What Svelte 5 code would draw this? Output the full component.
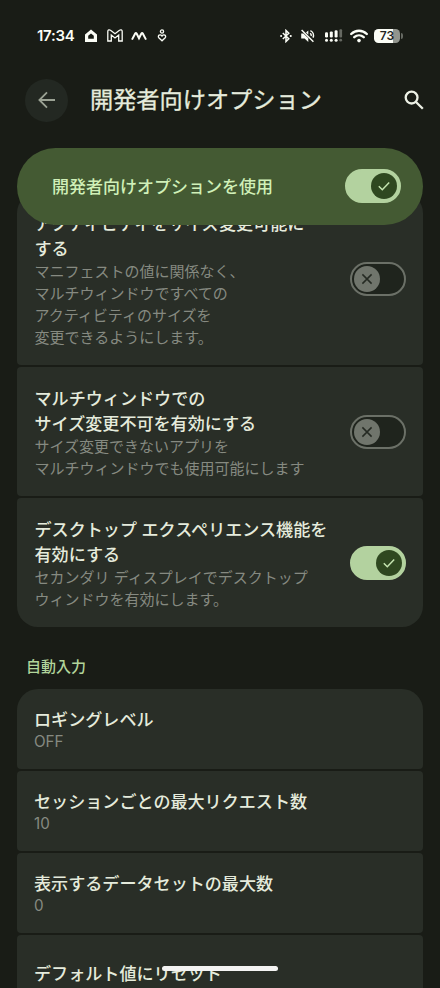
<script>
  let enabled = $state(true);

  let windowing = $state([
    {
      title: ['アクティビティをサイズ変更可能に', 'する'],
      summary: ['マニフェストの値に関係なく、', 'マルチウィンドウですべての', 'アクティビティのサイズを', '変更できるようにします。'],
      on: false
    },
    {
      title: ['マルチウィンドウでの', 'サイズ変更不可を有効にする'],
      summary: ['サイズ変更できないアプリを', 'マルチウィンドウでも使用可能にします'],
      on: false
    },
    {
      title: ['デスクトップ エクスペリエンス機能を', '有効にする'],
      summary: ['セカンダリ ディスプレイでデスクトップ', 'ウィンドウを有効にします。'],
      on: true
    }
  ]);

  const autofill = [
    { title: 'ロギングレベル', value: 'OFF' },
    { title: 'セッションごとの最大リクエスト数', value: '10' },
    { title: '表示するデータセットの最大数', value: '0' },
    { title: 'デフォルト値にリセット' }
  ];
</script>

{#snippet toggle(on, flip)}
  <button class="switch" class:on role="switch" aria-checked={on} aria-label="切り替え" onclick={flip}>
    <span class="knob">
      <svg width="16" height="16" viewBox="0 0 16 16">
        {#if on}
          <path d="M2.8 8.3 6.3 11.7 13.2 4.6" />
        {:else}
          <path d="M3.4 3.4 12.6 12.6M12.6 3.4 3.4 12.6" />
        {/if}
      </svg>
    </span>
  </button>
{/snippet}

<div class="screen">
  <div class="status">
    <span class="time">17:34</span>
    <svg class="home" width="14" height="14" viewBox="0 0 14 14">
      <path fill-rule="evenodd" d="M7 .6 13 5.4V13H1V5.4ZM7 4.4 4.2 6.8V9.8H9.8V6.8Z" />
    </svg>
    <svg class="mail line" width="16" height="13" viewBox="0 0 16 13">
      <path d="M.8 2.4C.8.8 2.4.4 3.5 1.3L8 4.8 12.5 1.3C13.6.4 15.2.8 15.2 2.4V12H11.7V6L8 8.9 4.3 6V12H.8Z" />
    </svg>
    <svg class="wave line" width="16" height="10" viewBox="0 0 16 10">
      <path d="M1 8.6 4.2 2.6Q4.9 1.4 5.6 2.6L8 7.3 10.4 2.6Q11.1 1.4 11.8 2.6L15 8.6" />
    </svg>
    <svg class="care line" width="10" height="13" viewBox="0 0 10 13">
      <circle cx="5" cy="2.5" r="1.6" />
      <path d="M5 11.8 1.8 8.7C.2 6.7 3.1 4.5 5 7 6.9 4.5 9.8 6.7 8.2 8.7Z" />
    </svg>

    <svg class="bluetooth line" width="12" height="14" viewBox="0 0 12 14">
      <path d="M2.8 4 8.8 9.7 6 12.5V1.5L8.8 4.3 2.8 10" />
      <path d="M1 7h.2M10.6 7h.3" stroke-linecap="round" stroke-width="1.8" />
    </svg>
    <svg class="mute" width="15" height="14" viewBox="0 0 15 14">
      <path d="M1.2 4.4H3.4L8.3 9.2V13L4.6 9.6H1.2ZM6 3.4 8.3 1.4V5.7Z" />
      <path class="stroke" d="M1.6 1 13.4 12.8M10.2 4.2C11.1 5 11.4 6 11.2 7M10.4 1.6C13 2.9 14.2 5.8 13 8.6" />
    </svg>
    <svg class="signal" width="18" height="13" viewBox="0 0 18 13">
      <rect x="0" y="3.2" width="3" height="5.2" rx="1.2" />
      <rect x="4.8" y="2.4" width="3" height="6" rx="1.2" />
      <rect x="9.6" y="1.2" width="3" height="7.2" rx="1.2" />
      <rect class="dim" x="14.4" y=".2" width="2.7" height="8.2" rx="1" />
      <circle cx="1.5" cy="11.2" r="1.5" />
      <circle cx="6.3" cy="11.2" r="1.5" />
      <circle cx="11.1" cy="11.2" r="1.5" />
      <circle class="dim" cx="15.7" cy="11.2" r="1.4" />
    </svg>
    <svg class="wifi" width="18" height="14" viewBox="0 0 18 14">
      <path class="stroke" d="M1.2 5C5.6.7 12.4.7 16.8 5M4.3 8.2C7 5.8 11 5.8 13.7 8.2" />
      <circle cx="9" cy="11.6" r="1.8" />
    </svg>
    <div class="battery"><span>73</span></div>
  </div>

  <header>
    <button class="back" aria-label="戻る">
      <svg width="18" height="18" viewBox="0 0 18 18">
        <path d="M17 9H1.6M9 1.4 1.4 9 9 16.6" />
      </svg>
    </button>
    <h1>開発者向けオプション</h1>
    <button class="search" aria-label="検索">
      <svg width="20" height="20" viewBox="0 0 20 20">
        <circle cx="7.6" cy="7.6" r="5.9" />
        <path d="M12 12 18.8 18.8" />
      </svg>
    </button>
  </header>

  <div class="main-switch">
    <span class="label">開発者向けオプションを使用</span>
    {@render toggle(enabled, () => (enabled = !enabled))}
  </div>

  <section class="windowing">
    {#each windowing as item}
      <div class="card">
        <div class="text">
          <h3>{#each item.title as line}<span>{line}</span>{/each}</h3>
          <p>{#each item.summary as line}<span>{line}</span>{/each}</p>
        </div>
        {@render toggle(item.on, () => (item.on = !item.on))}
      </div>
    {/each}
  </section>

  <h2>自動入力</h2>

  <section>
    {#each autofill as item}
      <div class="card small">
        <div class="text">
          <h3>{item.title}</h3>
          {#if item.value}<p>{item.value}</p>{/if}
        </div>
      </div>
    {/each}
  </section>

  <div class="gesture"></div>
</div>

<style>
  :global(body) {
    background: #191c16;
  }

  .screen {
    position: relative;
    width: 440px;
    height: 988px;
    overflow: hidden;
    background: #191c16;
    color: #e5ebdc;
    font-family: Inter, "Noto Sans CJK JP", sans-serif;
  }

  h1, h2, h3, p {
    margin: 0;
  }

  button {
    border: 0;
    padding: 0;
    cursor: pointer;
  }

  svg {
    display: block;
    flex: none;
  }

  .status {
    display: flex;
    align-items: center;
    height: 71px;
    padding: 0 37px;
    box-sizing: border-box;
    fill: #fbfdf6;
    color: #fbfdf6;
  }
  .time {
    width: 47px;
    font-size: 15px;
    font-weight: 600;
    letter-spacing: -0.25px;
  }
  .status .line {
    fill: none;
    stroke: #fbfdf6;
    stroke-width: 1.3;
  }
  .status .stroke {
    fill: none;
    stroke: #fbfdf6;
    stroke-width: 1.5;
  }
  .status .wave {
    margin-left: 8px;
    stroke-width: 2;
  }
  .mail {
    margin-left: 9px;
  }
  .care {
    margin-left: 10px;
  }
  .bluetooth {
    margin-left: auto;
  }
  .status .bluetooth {
    stroke-width: 1.5;
  }
  .mute {
    margin-left: 8px;
  }
  .signal {
    margin-left: 10px;
  }
  .wifi {
    margin-left: 7px;
  }
  .status .wifi .stroke {
    stroke-width: 2.4;
    stroke-linecap: round;
  }
  .dim {
    fill: #666962;
  }
  .battery {
    position: relative;
    width: 26px;
    height: 14px;
    margin: 0 3px 0 6px;
    border-radius: 4.5px;
    background: linear-gradient(90deg, #fbfdf6 73%, #92958e 73%);
    color: #20231d;
    font-size: 12px;
    font-weight: 600;
    line-height: 14px;
    text-align: center;
  }
  .battery::after {
    content: "";
    position: absolute;
    left: 27px;
    top: 4px;
    width: 2px;
    height: 6px;
    border-radius: 0 2px 2px 0;
    background: #666962;
  }

  header {
    display: flex;
    align-items: center;
    height: 58px;
    padding: 0 16px 0 25px;
  }
  .back {
    display: grid;
    place-items: center;
    width: 43px;
    height: 43px;
    border-radius: 50%;
    background: #232822;
  }
  .back path {
    fill: none;
    stroke: #9ba294;
    stroke-width: 1.8;
  }
  h1 {
    flex: 1;
    margin-left: 22px;
    font-size: 23.2px;
    font-weight: 400;
    line-height: 32px;
    white-space: nowrap;
    -webkit-text-stroke: 0.3px currentColor;
  }
  .search {
    background: none;
  }
  .search svg {
    fill: none;
    stroke: #edf1e6;
    stroke-width: 2.3;
  }

  .main-switch {
    position: relative;
    z-index: 1;
    display: flex;
    align-items: center;
    justify-content: space-between;
    box-sizing: border-box;
    height: 77px;
    margin: 19px 17px 0;
    padding: 0 22px 1px 35px;
    border-radius: 39px;
    background: #445a33;
    color: #d0f0b8;
    font-size: 17px;
    font-weight: 500;
  }
  .label {
    padding-bottom: 2px;
  }

  section {
    display: flex;
    flex-direction: column;
    gap: 2px;
    margin: 0 17px;
  }
  /* the list is scrolled a little under the main switch */
  .windowing {
    margin-top: -33px;
  }

  .card {
    display: flex;
    align-items: center;
    justify-content: space-between;
    box-sizing: border-box;
    padding: 18px 17px 17px;
    border-radius: 4px;
    background: #292e27;
  }
  .card:first-child {
    border-top-left-radius: 21px;
    border-top-right-radius: 21px;
  }
  .windowing .card:last-child {
    border-bottom-left-radius: 21px;
    border-bottom-right-radius: 21px;
  }
  .windowing .text {
    margin: 1px 0 -1px 0.5px;
  }
  .small {
    height: 80px;
    padding: 17px 17px 16px;
  }
  .text {
    white-space: nowrap;
  }
  .text span {
    display: block;
  }
  h3 {
    font-size: 17.08px;
    font-weight: 500;
    line-height: 25px;
  }
  p {
    color: #868a81;
    font-size: 15px;
    line-height: 22px;
  }
  .small p {
    margin-top: -1px;
    font-size: 15.2px;
  }
  .small:last-child {
    padding-top: 13px;
  }

  h2 {
    margin: 28px 26px 11px;
    color: #b1d59b;
    font-size: 15px;
    font-weight: 500;
    line-height: 23px;
  }

  .switch {
    display: flex;
    align-items: center;
    flex: none;
    box-sizing: border-box;
    width: 56px;
    height: 34px;
    padding: 0 2px;
    border: 2px solid #6b7067;
    border-radius: 17px;
    background: #1f241d;
  }
  .switch.on {
    justify-content: flex-end;
    border-color: #b3d29f;
    background: #b3d29f;
  }
  .knob {
    display: grid;
    place-items: center;
    width: 26px;
    height: 26px;
    border-radius: 50%;
    background: #70756c;
  }
  .on .knob {
    background: #2f4820;
  }
  .knob path {
    fill: none;
    stroke: #252a23;
    stroke-width: 1.5;
  }
  .on .knob path {
    stroke: #c5e5b0;
  }

  .gesture {
    position: absolute;
    left: 162px;
    top: 966px;
    z-index: 2;
    width: 116px;
    height: 5px;
    border-radius: 3px;
    background: #f3f3f2;
  }
</style>
